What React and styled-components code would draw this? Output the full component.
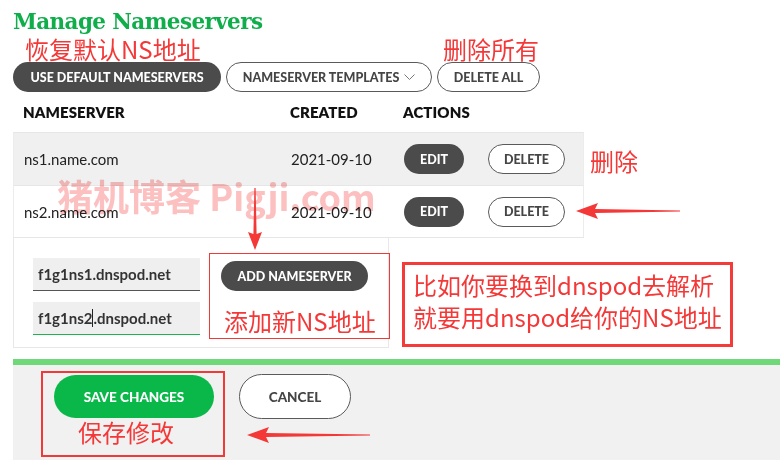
import styled, { createGlobalStyle } from 'styled-components';

const GlobalStyle = createGlobalStyle`
  body {
    margin: 0;
    background: #fff;
    font-family: Lato, "Noto Sans", sans-serif;
  }
`;

const Page = styled.div`
  position: relative;
  width: 780px;
  height: 469px;
  overflow: hidden;
  padding-left: 13px;
  box-sizing: border-box;
`;

const Title = styled.h1`
  margin: 0;
  padding-top: 10px;
  font-family: "DejaVu Serif", serif;
  font-weight: 900;
  font-size: 21.5px;
  line-height: 23px;
  letter-spacing: -0.6px;
  color: #0fae4b;
`;

const Note = styled.div`
  font-family: "Noto Sans CJK SC", sans-serif;
  font-size: 24px;
  line-height: ${p => p.$lh || 28}px;
  color: #f43838;
  padding-left: ${p => p.$indent || 0}px;
  white-space: nowrap;
`;

const Toolbar = styled.div`
  margin-top: 4px;
  display: flex;
  align-items: flex-end;
  gap: 5px;
`;

const ToolGroup = styled.div`
  display: flex;
  flex-direction: column;
  gap: 1px;
`;

const Pill = styled.button`
  display: inline-flex;
  align-items: center;
  justify-content: center;
  gap: 5px;
  box-sizing: border-box;
  width: ${p => p.$w}px;
  height: ${p => p.$h || 30}px;
  padding: 0;
  border-radius: ${p => (p.$h || 30) / 2}px;
  font-family: Lato, sans-serif;
  font-weight: 900;
  font-size: ${p => p.$fs || 12.5}px;
  text-transform: uppercase;
  background: ${p => (p.$dark ? '#4b4b4b' : '#fff')};
  color: ${p => (p.$dark ? '#fff' : '#454545')};
  border: ${p => (p.$dark ? 'none' : '1px solid #5a5a5a')};
  flex-shrink: 0;
`;

const SaveButton = styled(Pill)`
  background: #0ab84a;
  color: #fff;
  border: none;
`;

const Chevron = () => (
  <svg width="11" height="7" viewBox="0 0 11 7">
    <polyline points="0.5,0.5 5.5,5.5 10.5,0.5" fill="none" stroke="#777" strokeWidth="1" />
  </svg>
);

const MidRow = styled.div`
  display: flex;
  align-items: flex-start;
`;

const Table = styled.div`
  width: 571px;
  border-bottom: 1px solid #e6e6e6;
`;

const Row = styled.div`
  display: grid;
  grid-template-columns: 267px 113px 1fr;
  align-items: center;
  box-sizing: border-box;
  height: ${p => p.$h}px;
  background: ${p => p.$bg || 'transparent'};
  border-top: ${p => (p.$head ? 'none' : '1px solid #e6e6e6')};
  border-left: ${p => (p.$head ? 'none' : '1px solid #ececec')};
  border-right: ${p => (p.$head ? 'none' : '1px solid #ececec')};
`;

const HeadCell = styled.div`
  padding-left: 10px;
  font-weight: 800;
  font-size: 15px;
  color: #111;
  letter-spacing: 0.1px;
`;

const Cell = styled.div`
  padding-left: 10px;
  font-size: 15px;
  color: #222;
  display: flex;
  align-items: center;
  gap: 24px;
`;

const Aside = styled.div`
  padding: 55px 0 0 6px;
`;

const AddRow = styled.div`
  display: flex;
  align-items: flex-start;
  gap: 13px;
`;

const AddBox = styled.div`
  width: 376px;
  height: 110px;
  box-sizing: border-box;
  border: 1px solid #e8e8e8;
  border-top: none;
  display: flex;
  align-items: flex-start;
  padding: 20px 0 0 19px;
  gap: 9px;
`;

const Inputs = styled.div`
  display: flex;
  flex-direction: column;
  gap: 11px;
`;

const Field = styled.div`
  width: 167px;
  height: 33px;
  box-sizing: border-box;
  background: #efefef;
  border-bottom: ${p => (p.$active ? '1.5px solid #1db34f' : '1px solid #555')};
  display: flex;
  align-items: center;
  padding-left: 5px;
  font-weight: 700;
  font-size: 15px;
  color: #333;
`;

const Caret = styled.span`
  display: inline-block;
  width: 1px;
  height: 18px;
  background: #222;
`;

const Callout = styled.div`
  box-sizing: border-box;
  height: 86px;
  margin-top: ${p => p.$mt || 0}px;
  border: ${p => p.$bw || 1}px solid #f03a3a;
  padding: ${p => p.$pad};
  display: flex;
  flex-direction: column;
  align-items: flex-start;
  gap: ${p => p.$gap || 0}px;
`;

const HintBox = styled.div`
  margin-top: 24px;
  width: 331px;
  height: 85px;
  box-sizing: border-box;
  border: 3px solid #f53a3a;
  padding: 4px 0 0 8px;
  font-family: "Noto Sans CJK SC", sans-serif;
  font-size: 24px;
  line-height: 32px;
  color: #f43838;
  white-space: nowrap;
`;

const Footer = styled.div`
  margin-top: 11px;
  height: 101px;
  box-sizing: border-box;
  border-top: 6px solid #6fd97a;
  background: #f1f1f1;
  display: flex;
  align-items: flex-start;
  padding: 6px 0 0 28px;
  gap: 14px;
`;

const CancelWrap = styled.div`
  padding-top: 3px;
`;

const Watermark = styled.div`
  position: absolute;
  left: 57px;
  top: 177px;
  font-family: "Noto Sans CJK SC", sans-serif;
  font-weight: 700;
  font-size: 36px;
  line-height: 36px;
  color: #fcc0c0;
  mix-blend-mode: multiply;
  white-space: nowrap;
  pointer-events: none;
`;

const Overlay = styled.svg`
  position: absolute;
  left: ${p => p.$x}px;
  top: ${p => p.$y}px;
  overflow: visible;
`;

const LeftArrow = ({ x, y, len }) => (
  <Overlay $x={x} $y={y - 10} width={len} height="20" viewBox={`0 0 ${len} 20`}>
    <polygon
      points={`0,10 22,2 19,8 ${len},9.6 ${len},10.4 19,12 22,18`}
      fill="#f43838"
    />
  </Overlay>
);

const DownArrow = ({ x, y, len }) => (
  <Overlay $x={x - 8} $y={y} width="16" height={len} viewBox={`0 0 16 ${len}`}>
    <polygon
      points={`7.4,0 8.6,0 9.6,${len - 16} 15,${len - 18} 8,${len} 1,${len - 18} 6.4,${len - 16}`}
      fill="#f43838"
    />
  </Overlay>
);

const rows = [
  { ns: 'ns1.name.com', created: '2021-09-10', bg: '#f0f0f0' },
  { ns: 'ns2.name.com', created: '2021-09-10', bg: '#fff' },
];

export default function App() {
  return (
    <>
      <GlobalStyle />
      <Page>
        <Title>Manage Nameservers</Title>
        <Toolbar>
          <ToolGroup>
            <Note $indent={12} $lh={24}>恢复默认NS地址</Note>
            <Pill $dark $w={208}>Use default nameservers</Pill>
          </ToolGroup>
          <ToolGroup>
            <Pill $w={206}>Nameserver templates <Chevron /></Pill>
          </ToolGroup>
          <ToolGroup>
            <Note $indent={6} $lh={24}>删除所有</Note>
            <Pill $w={103}>Delete all</Pill>
          </ToolGroup>
        </Toolbar>

        <MidRow>
          <Table>
            <Row $head $h={40}>
              <HeadCell>NAMESERVER</HeadCell>
              <HeadCell>CREATED</HeadCell>
              <HeadCell>ACTIONS</HeadCell>
            </Row>
            {rows.map(r => (
              <Row key={r.ns} $h={r.bg === '#fff' ? 52 : 53} $bg={r.bg}>
                <Cell>{r.ns}</Cell>
                <Cell>{r.created}</Cell>
                <Cell>
                  <Pill $dark $w={60}>Edit</Pill>
                  <Pill $w={77}>Delete</Pill>
                </Cell>
              </Row>
            ))}
          </Table>
          <Aside>
            <Note>删除</Note>
          </Aside>
        </MidRow>

        <AddRow>
          <AddBox>
            <Inputs>
              <Field>f1g1ns1.dnspod.net</Field>
              <Field $active>f1g1ns2<Caret />.dnspod.net</Field>
            </Inputs>
            <Callout $pad="7px 13px 0 11px" $gap={16} $mt={-5}>
              <Pill $dark $w={147}>Add nameserver</Pill>
              <Note $indent={3}>添加新NS地址</Note>
            </Callout>
          </AddBox>
          <HintBox>
            比如你要换到dnspod去解析
            <br />
            就要用dnspod给你的NS地址
          </HintBox>
        </AddRow>

        <Footer>
          <Callout $bw={2} $pad="2px 9px 0 11px">
            <SaveButton $w={160} $h={43} $fs={13.5}>Save changes</SaveButton>
            <Note $indent={24}>保存修改</Note>
          </Callout>
          <CancelWrap>
            <Pill $w={112} $h={45} $fs={13.5}>Cancel</Pill>
          </CancelWrap>
        </Footer>

        <Watermark>猪机博客 Pigji.com</Watermark>
        <LeftArrow x={576} y={211} len={104} />
        <DownArrow x={255} y={188} len={62} />
        <LeftArrow x={247} y={435} len={123} />
      </Page>
    </>
  );
}
